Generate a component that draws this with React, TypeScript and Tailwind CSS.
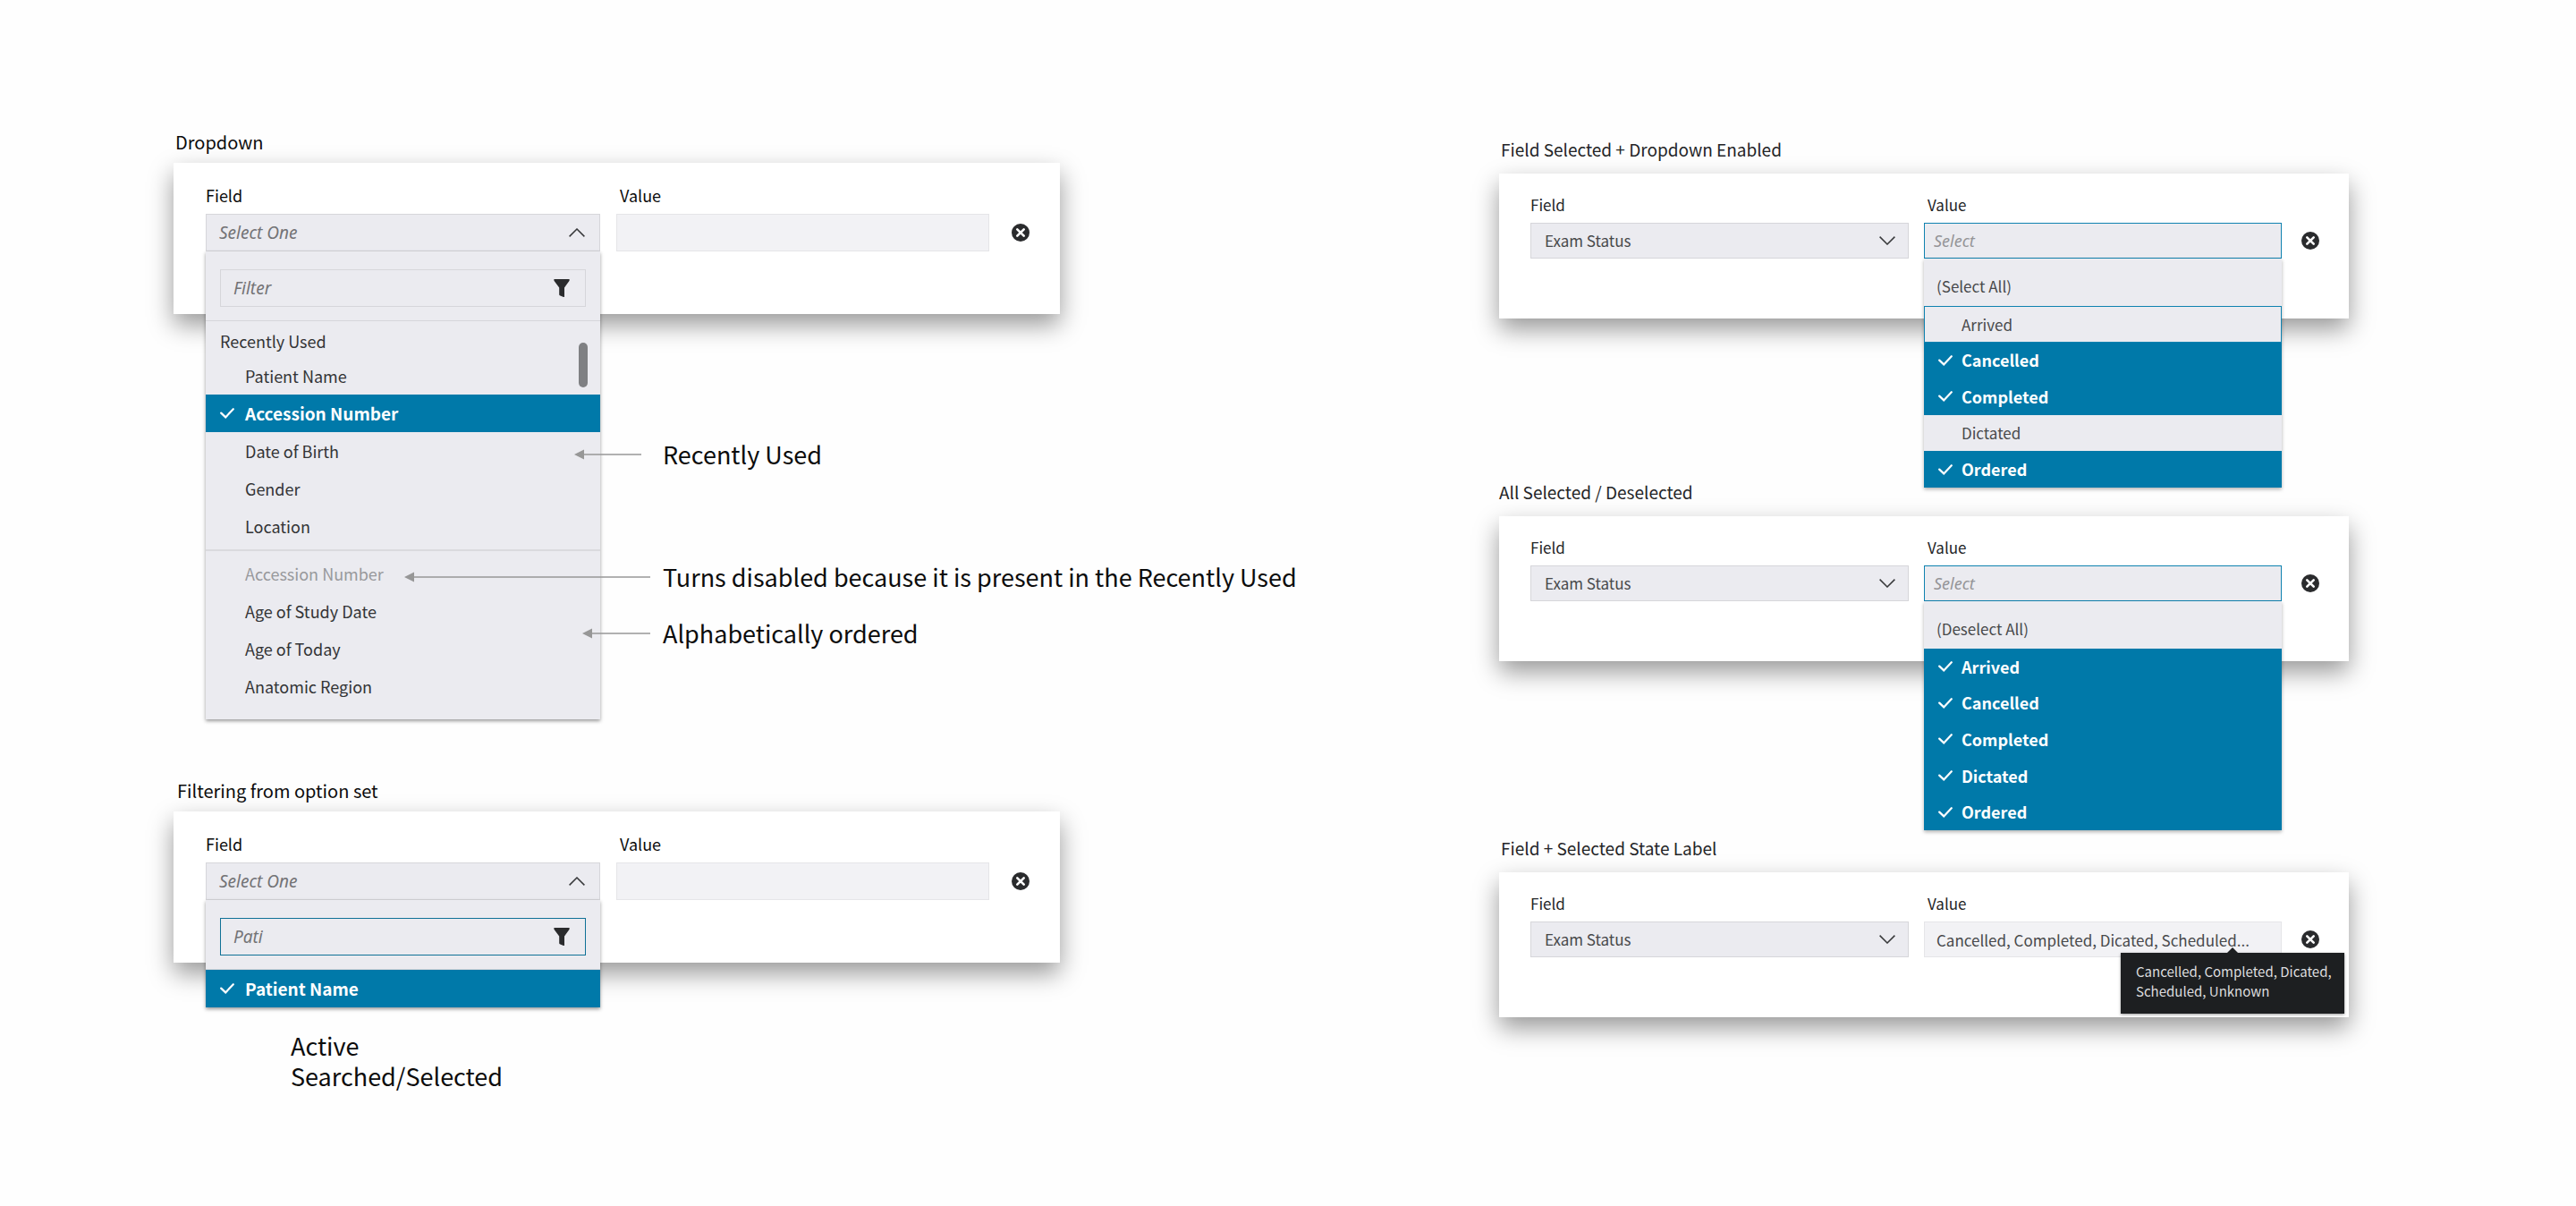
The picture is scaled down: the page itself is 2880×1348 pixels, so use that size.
import React from "react";

const RECENT = ["Patient Name", "Accession Number", "Date of Birth", "Gender", "Location"];
const ALPHABETICAL = ["Accession Number", "Age of Study Date", "Age of Today", "Anatomic Region"];
const STATUSES = ["Arrived", "Cancelled", "Completed", "Dictated", "Ordered"];

const ITALIC = "font-['Noto_Sans',sans-serif] italic";

function Check() {
  return (
    <svg viewBox="0 0 16 12" className="h-3 w-4 shrink-0" fill="none" stroke="currentColor" strokeWidth="2.2" aria-hidden="true">
      <path d="M1.2 5.6 6.2 10.4 14.8 1.2" strokeLinecap="round" />
    </svg>
  );
}

function Chevron({ up = false }: { up?: boolean }) {
  return (
    <svg viewBox="0 0 18 10" className="h-[10px] w-[18px] shrink-0" fill="none" stroke="#38393b" strokeWidth="1.5" aria-hidden="true">
      <path d={up ? "M0.6 9.4 9 1 17.4 9.4" : "M0.6 0.6 9 9 17.4 0.6"} />
    </svg>
  );
}

function Funnel() {
  return (
    <svg viewBox="0 0 18 20" className="h-5 w-[18px] shrink-0" fill="#2a2b2d" aria-hidden="true">
      <path d="M0.4 0H17.6V1.8L12 9.6V19.4Q11.8 20.2 11 19.9L6.8 18.3Q6.2 18 6.2 17.3V9.6L0.4 1.8Z" />
    </svg>
  );
}

function RemoveButton() {
  return (
    <button type="button" aria-label="Remove" className="block h-5 w-5 shrink-0">
      <svg viewBox="0 0 20 20" className="h-5 w-5" aria-hidden="true">
        <circle cx="10" cy="10" r="10" fill="#2a2b2d" />
        <path d="M6.3 6.3 13.7 13.7M13.7 6.3 6.3 13.7" stroke="#fff" strokeWidth="2.6" strokeLinecap="round" />
      </svg>
    </button>
  );
}

function Annotation({ length, className, children }: { length: number; className: string; children: React.ReactNode }) {
  return (
    <p className={`absolute z-20 flex h-10 items-center whitespace-nowrap text-[27px] leading-10 text-[#0c0c0c] ${className}`}>
      <svg width={length} height="12" viewBox={`0 0 ${length} 12`} className="shrink-0" aria-hidden="true">
        <path d="M0 6 11 0.5V11.5Z" fill="#979797" />
        <path d={`M10 6H${length}`} stroke="#979797" strokeWidth="1.3" />
      </svg>
      {children}
    </p>
  );
}

function FieldOption({ label, selected, disabled }: { label: string; selected?: boolean; disabled?: boolean }) {
  if (selected) {
    return (
      <button type="button" role="option" aria-selected="true" className="flex h-[42px] w-full items-center gap-3 bg-[#0079a9] pl-4 text-left text-[19px] font-bold text-white">
        <Check />
        {label}
      </button>
    );
  }
  return (
    <button
      type="button"
      role="option"
      aria-selected="false"
      disabled={disabled}
      className="block h-[42px] w-full pl-11 text-left text-[18px] text-[#333436] disabled:text-[#98999c]"
    >
      {label}
    </button>
  );
}

/* Wide card: an open field picker beside an empty value box. */
function PickerCard({ id, filter, active, children }: { id: string; filter: string; active?: boolean; children: React.ReactNode }) {
  return (
    <div className="mt-[9px] flex bg-white pt-6 pr-[34px] pb-[70px] pl-9 shadow-[0_12px_26px_rgba(0,0,0,0.4)]">
      <div className="min-w-0 flex-[441]">
        <label htmlFor={`${id}-field`} className="block text-[18px] leading-6 text-[#0c0c0c]">Field</label>
        <div className="relative mt-[9px]">
          <button
            id={`${id}-field`}
            type="button"
            aria-haspopup="listbox"
            aria-expanded="true"
            className="flex h-[42px] w-full items-center justify-between border border-[#d6d6da] bg-[#ebebf0] pr-4 pl-[14px] text-[19px] text-[#737376]"
          >
            <span className={ITALIC}>Select One</span>
            <Chevron up />
          </button>
          <div className="absolute inset-x-0 top-full z-10 bg-[#ebebf0] shadow-[0_2px_4px_rgba(0,0,0,0.4)]">
            <div className="border-b border-[#d6d6da] px-4 pt-5 pb-[15px]">
              <div className={active ? "flex h-[42px] items-center border border-[#0f7196] pr-[17px]" : "flex h-[42px] items-center border border-[#d6d6da] pr-[17px]"}>
                <input
                  type="text"
                  aria-label="Filter fields"
                  placeholder="Filter"
                  defaultValue={filter}
                  className={`h-full min-w-0 flex-1 bg-transparent pl-[14px] text-[19px] text-[#737376] outline-none placeholder:text-[#737376] ${ITALIC}`}
                />
                <Funnel />
              </div>
            </div>
            {children}
          </div>
        </div>
      </div>
      <div className="ml-[18px] min-w-0 flex-[417]">
        <label htmlFor={`${id}-value`} className="block pl-1 text-[18px] leading-6 text-[#0c0c0c]">Value</label>
        <input id={`${id}-value`} type="text" className="mt-[9px] block h-[42px] w-full border border-[#e5e5e8] bg-[#f2f2f5] px-4 text-[18px]" />
      </div>
      <div className="mt-[44px] ml-[25px]">
        <RemoveButton />
      </div>
    </div>
  );
}

/* Narrow card: a chosen field beside the value control passed as children. */
function StatusCard({ id, children }: { id: string; children: React.ReactNode }) {
  return (
    <div className="mt-[13px] flex bg-white pt-[23px] pr-[33px] pb-[67px] pl-[35px] shadow-[0_12px_26px_rgba(0,0,0,0.4)]">
      <div className="min-w-0 flex-[423]">
        <label htmlFor={`${id}-field`} className="block text-[17px] leading-6 text-[#242527]">Field</label>
        <div className="mt-2 grid items-center">
          <select
            id={`${id}-field`}
            className="col-start-1 row-start-1 h-10 w-full appearance-none border border-[#d6d6da] bg-[#ebebf0] px-[15px] text-[17px] text-[#48494b]"
          >
            <option>Exam Status</option>
          </select>
          <span className="pointer-events-none col-start-1 row-start-1 mr-[15px] justify-self-end">
            <Chevron />
          </span>
        </div>
      </div>
      <div className="ml-[17px] min-w-0 flex-[400]">
        <label htmlFor={`${id}-value`} className="block pl-1 text-[17px] leading-6 text-[#242527]">Value</label>
        <div className="relative mt-2">{children}</div>
      </div>
      <div className="mt-[42px] ml-[22px]">
        <RemoveButton />
      </div>
    </div>
  );
}

function StatusPicker({ id, toggle, selected, focused }: { id: string; toggle: string; selected: string[]; focused?: string }) {
  return (
    <>
      <input
        id={`${id}-value`}
        type="text"
        placeholder="Select"
        className={`block h-10 w-full border border-[#0f82b0] bg-[#ebebf0] px-[10px] text-[18px] outline-none placeholder:text-[#949497] ${ITALIC}`}
      />
      <div role="listbox" aria-multiselectable="true" className="absolute inset-x-0 top-full z-10 bg-[#ebebf0] shadow-[0_2px_4px_rgba(0,0,0,0.3)]">
        <button type="button" className="block h-[53px] w-full px-[14px] pt-2 text-left text-[17px] text-[#48494b]">{toggle}</button>
        <div className="grid h-[203px] grid-rows-5">
          {STATUSES.map((status) =>
            selected.includes(status) ? (
              <button key={status} type="button" role="option" aria-selected="true" className="flex items-center gap-[10px] bg-[#0079a9] pl-4 text-left text-[18px] font-bold text-white">
                <Check />
                {status}
              </button>
            ) : (
              <button
                key={status}
                type="button"
                role="option"
                aria-selected="false"
                className={
                  status === focused
                    ? "border border-[#0f82b0] pl-[41px] text-left text-[17px] text-[#48494b]"
                    : "pl-[42px] text-left text-[17px] text-[#48494b]"
                }
              >
                {status}
              </button>
            ),
          )}
        </div>
      </div>
    </>
  );
}

export default function App() {
  return (
    <main className="grid min-h-screen grid-cols-[minmax(0,991fr)_minmax(0,950fr)] gap-x-[491px] bg-[#fefefe] pr-[254px] pl-[194px] font-['Noto_Sans_CJK_SC','Noto_Sans',sans-serif]">
      <div className="pt-[145px]">
        <section className="relative">
          <h2 className="pl-0.5 text-[20px] leading-7 text-[#0c0c0c]">Dropdown</h2>
          <PickerCard id="dropdown" filter="">
            <div role="listbox" aria-label="Fields" className="relative">
              <div className="border-b-2 border-[#dadade] pb-[5px]">
                <p className="h-10 pt-1 pl-4 text-[18px] leading-9 text-[#333436]">Recently Used</p>
                {RECENT.map((label) => (
                  <FieldOption key={label} label={label} selected={label === "Accession Number"} />
                ))}
              </div>
              <div className="pt-1 pb-4">
                {ALPHABETICAL.map((label) => (
                  <FieldOption key={label} label={label} disabled={label === "Accession Number"} />
                ))}
              </div>
              <div className="absolute top-6 right-[14px] h-[50px] w-[10px] rounded-full bg-[#7f8083]" />
            </div>
          </PickerCard>
          <Annotation length={75} className="top-[343px] left-[448px] gap-6">Recently Used</Annotation>
          <Annotation length={275} className="top-[480px] left-[258px] gap-[14px]">Turns disabled because it is present in the Recently Used</Annotation>
          <Annotation length={76} className="top-[543px] left-[457px] gap-[14px]">Alphabetically ordered</Annotation>
        </section>

        <section className="mt-[519px]">
          <h2 className="pl-1 text-[20px] leading-7 text-[#0c0c0c]">Filtering from option set</h2>
          <PickerCard id="filtering" filter="Pati" active>
            <div role="listbox" aria-label="Matching fields">
              <FieldOption label="Patient Name" selected />
            </div>
          </PickerCard>
          <p className="mt-[76px] pl-[131px] text-[27px] leading-[34px] text-[#0c0c0c]">
            Active
            <br />
            Searched/Selected
          </p>
        </section>
      </div>

      <div className="pt-[153px]">
        <section>
          <h2 className="pl-0.5 text-[19px] leading-7 text-[#242527]">Field Selected + Dropdown Enabled</h2>
          <StatusCard id="enabled">
            <StatusPicker id="enabled" toggle="(Select All)" selected={["Cancelled", "Completed", "Ordered"]} focused="Arrived" />
          </StatusCard>
        </section>

        <section className="mt-[180px]">
          <h2 className="text-[19px] leading-7 text-[#242527]">All Selected / Deselected</h2>
          <StatusCard id="all">
            <StatusPicker id="all" toggle="(Deselect All)" selected={STATUSES} />
          </StatusCard>
        </section>

        <section className="mt-[195px]">
          <h2 className="pl-0.5 text-[19px] leading-7 text-[#242527]">Field + Selected State Label</h2>
          <StatusCard id="label">
            <input
              id="label-value"
              type="text"
              readOnly
              value="Cancelled, Completed, Dicated, Scheduled..."
              className="block h-10 w-full border border-[#e5e5e8] bg-[#f2f2f5] px-[13px] text-[17px] text-[#48494b]"
            />
            <div role="tooltip" className="absolute top-[35px] right-[-70px] z-10 w-[250px] bg-[#1d1f21] px-[17px] pt-[10px] pb-[14px] shadow-[0_1px_3px_rgba(0,0,0,0.4)]">
              <svg viewBox="0 0 12 6" className="absolute bottom-full left-[119px] h-[6px] w-3" fill="#1d1f21" aria-hidden="true">
                <path d="M0 6 6 0 12 6Z" />
              </svg>
              <p className="text-[15px] leading-[22px] whitespace-nowrap text-[#dcdcde]">
                Cancelled, Completed, Dicated,
                <br />
                Scheduled, Unknown
              </p>
            </div>
          </StatusCard>
        </section>
      </div>
    </main>
  );
}
